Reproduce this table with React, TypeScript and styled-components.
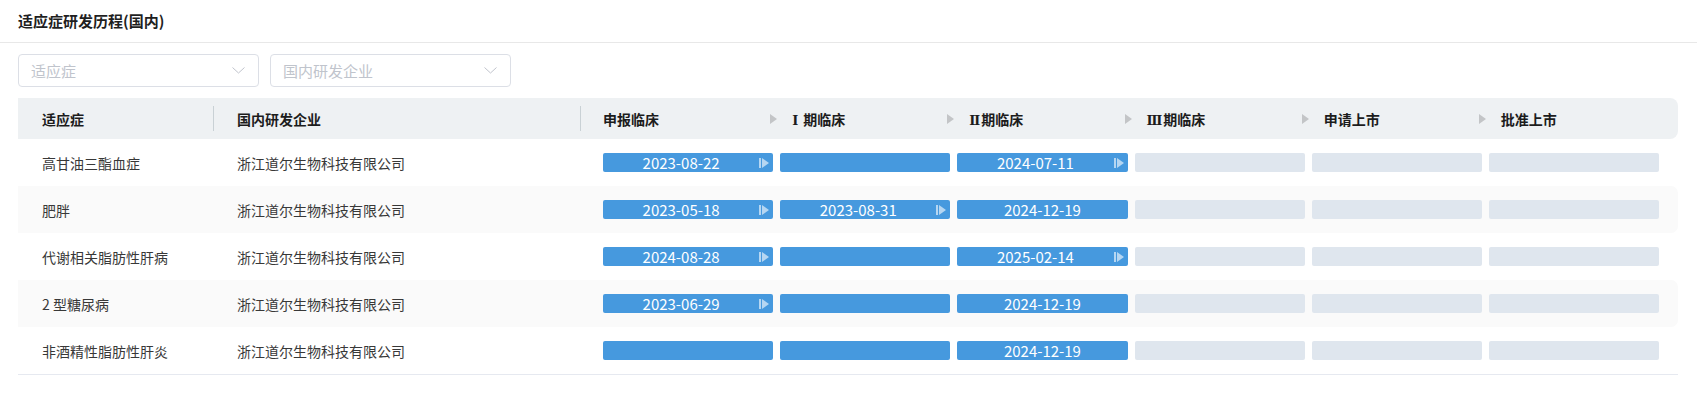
import React from "react";
import styled, { createGlobalStyle } from "styled-components";

const GlobalStyle = createGlobalStyle`
  html, body {
    margin: 0;
    padding: 0;
    background: #ffffff;
  }
  body {
    font-family: "Noto Sans CJK SC", "Noto Sans", "Liberation Sans", sans-serif;
    color: #333333;
  }
  * { box-sizing: border-box; }
`;

const Panel = styled.div`
  width: 1697px;
  background: #ffffff;
`;

const TitleBar = styled.div`
  height: 43px;
  display: flex;
  align-items: center;
  padding: 0 0 2px 18px;
  border-bottom: 1px solid #e8e8e8;
  font-size: 15px;
  font-weight: 700;
  color: #1f1f1f;
`;

const Body = styled.div`
  padding: 11px 19px 0 18px;
`;

const Filters = styled.div`
  display: flex;
  gap: 11px;
`;

const Select = styled.div`
  width: 241px;
  height: 33px;
  border: 1px solid #dcdfe6;
  border-radius: 4px;
  display: flex;
  align-items: center;
  justify-content: space-between;
  padding: 0 13px 0 12px;
  font-size: 15px;
  color: #c0c4cc;
`;

const Table = styled.div`
  margin-top: 11px;
  border-bottom: 1px solid #e6e9f0;
`;

const cols = "195px 367px 1fr";

const HeaderRow = styled.div`
  display: grid;
  grid-template-columns: ${cols};
  height: 41px;
  align-items: center;
  background: #eef1f3;
  border-radius: 0 8px 8px 0;
  font-size: 14px;
  font-weight: 700;
  color: #1c1c1c;
`;

const BodyRow = styled.div<{ $striped: boolean }>`
  display: grid;
  grid-template-columns: ${cols};
  height: 47px;
  align-items: center;
  background: ${(p) => (p.$striped ? "#fafafa" : "#ffffff")};
  border-radius: 0 7px 7px 0;
  font-size: 14px;
  color: #383838;
`;

const FirstCell = styled.div`
  padding-left: 24px;
  white-space: nowrap;
`;

const HeadDividedCell = styled.div<{ $pad: number }>`
  height: 25px;
  display: flex;
  align-items: center;
  border-left: 1px solid #c9d1d5;
  padding-left: ${(p) => p.$pad}px;
  white-space: nowrap;
`;

const BodyCell = styled.div<{ $pad: number }>`
  padding-left: ${(p) => p.$pad}px;
  white-space: nowrap;
`;

const StageGrid = styled.div<{ $pad: number }>`
  flex: 1;
  display: grid;
  grid-template-columns: repeat(6, minmax(0, 1fr));
  column-gap: 7px;
  padding: 0 19px 0 ${(p) => p.$pad}px;
  align-items: center;
`;

const StageHead = styled.div<{ $lead: boolean }>`
  display: flex;
  align-items: center;
  gap: 15px;
  margin-left: ${(p) => (p.$lead ? "-10px" : "0")};
  white-space: nowrap;
`;

const Numeral = styled.span<{ $wide: boolean }>`
  font-family: "DejaVu Serif", "Liberation Serif", serif;
  font-weight: 700;
  font-size: 13px;
  margin-right: ${(p) => (p.$wide ? "5px" : "1px")};
`;

const Bar = styled.div<{ $filled: boolean }>`
  height: 19px;
  border-radius: 2px;
  background: ${(p) => (p.$filled ? "#4699de" : "#dfe6ee")};
  display: flex;
  align-items: center;
  color: #ffffff;
  font-size: 15px;
  line-height: 19px;
`;

const BarText = styled.span`
  flex: 1;
  text-align: center;
`;

const BarIcon = styled.svg`
  width: 10px;
  height: 10px;
  margin-right: 4px;
  flex: none;
`;

const Arrow = styled.svg`
  width: 7px;
  height: 10px;
  flex: none;
`;

const Chevron = () => (
  <svg width="13" height="7" viewBox="0 0 13 7">
    <polyline points="0.5,0.5 6.5,6 12.5,0.5" fill="none" stroke="#c0c4cc" strokeWidth="1" />
  </svg>
);

const HeadArrow = () => (
  <Arrow viewBox="0 0 7 10">
    <polygon points="0,0 7,5 0,10" fill="#c3c5c7" />
  </Arrow>
);

const NextIcon = () => (
  <BarIcon viewBox="0 0 10 10">
    <rect x="0" y="0" width="2" height="10" fill="rgba(255,255,255,0.6)" />
    <polygon points="3,0 10,5 3,10" fill="rgba(255,255,255,0.6)" />
  </BarIcon>
);

type Stage = { filled: boolean; date?: string; next?: boolean };

const stages: { numeral?: string; label: string }[] = [
  { label: "申报临床" },
  { numeral: "Ⅰ", label: "期临床" },
  { numeral: "Ⅱ", label: "期临床" },
  { numeral: "Ⅲ", label: "期临床" },
  { label: "申请上市" },
  { label: "批准上市" },
];

const E: Stage = { filled: false };
const B: Stage = { filled: true };
const d = (date: string, next = false): Stage => ({ filled: true, date, next });

const rows: { name: string; company: string; stages: Stage[] }[] = [
  { name: "高甘油三酯血症", company: "浙江道尔生物科技有限公司", stages: [d("2023-08-22", true), B, d("2024-07-11", true), E, E, E] },
  { name: "肥胖", company: "浙江道尔生物科技有限公司", stages: [d("2023-05-18", true), d("2023-08-31", true), d("2024-12-19"), E, E, E] },
  { name: "代谢相关脂肪性肝病", company: "浙江道尔生物科技有限公司", stages: [d("2024-08-28", true), B, d("2025-02-14", true), E, E, E] },
  { name: "2 型糖尿病", company: "浙江道尔生物科技有限公司", stages: [d("2023-06-29", true), B, d("2024-12-19"), E, E, E] },
  { name: "非酒精性脂肪性肝炎", company: "浙江道尔生物科技有限公司", stages: [B, B, d("2024-12-19"), E, E, E] },
];

export default function App() {
  return (
    <>
      <GlobalStyle />
      <Panel>
        <TitleBar>适应症研发历程(国内)</TitleBar>
        <Body>
          <Filters>
            <Select>
              <span>适应症</span>
              <Chevron />
            </Select>
            <Select>
              <span>国内研发企业</span>
              <Chevron />
            </Select>
          </Filters>
          <Table>
            <HeaderRow>
              <FirstCell>适应症</FirstCell>
              <HeadDividedCell $pad={23}>国内研发企业</HeadDividedCell>
              <HeadDividedCell $pad={0}>
                <StageGrid $pad={22}>
                  {stages.map((s, i) => (
                    <StageHead key={i} $lead={i > 0}>
                      {i > 0 && <HeadArrow />}
                      <span>
                        {s.numeral && <Numeral $wide={s.numeral === "Ⅰ"}>{s.numeral}</Numeral>}
                        {s.label}
                      </span>
                    </StageHead>
                  ))}
                </StageGrid>
              </HeadDividedCell>
            </HeaderRow>
            {rows.map((r, ri) => (
              <BodyRow key={r.name} $striped={ri % 2 === 1}>
                <FirstCell>{r.name}</FirstCell>
                <BodyCell $pad={24}>{r.company}</BodyCell>
                <StageGrid $pad={23}>
                  {r.stages.map((s, si) => (
                    <Bar key={si} $filled={s.filled}>
                      <BarText>{s.date ?? ""}</BarText>
                      {s.next && <NextIcon />}
                    </Bar>
                  ))}
                </StageGrid>
              </BodyRow>
            ))}
          </Table>
        </Body>
      </Panel>
    </>
  );
}
